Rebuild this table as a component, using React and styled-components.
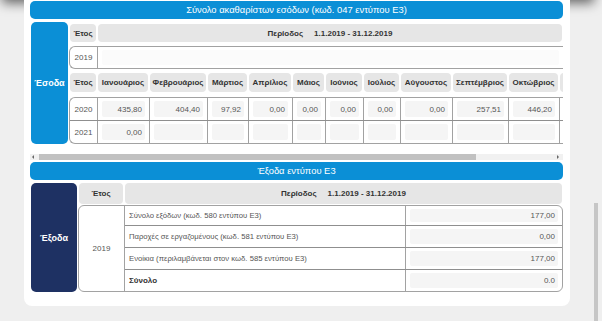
import React from 'react'
import styled, { createGlobalStyle } from 'styled-components'

const GlobalStyle = createGlobalStyle`
  html, body {
    margin: 0;
    padding: 0;
    background: #efefef;
  }
  body {
    font-family: "Liberation Sans", Arial, sans-serif;
  }
`

const Page = styled.div`
  position: relative;
  width: 602px;
  height: 321px;
  overflow: hidden;
  display: flex;
  align-items: flex-start;
  background: #efefef;
`

const TopShade = styled.div`
  position: absolute;
  top: -16px;
  left: 2px;
  right: 8px;
  height: 16px;
  box-shadow: 0 3px 12px rgba(0, 0, 0, 0.6);
`

const Card = styled.div`
  position: relative;
  z-index: 1;
  margin-left: 24px;
  width: 546px;
  box-sizing: border-box;
  background: #fff;
  border-radius: 0 0 8px 8px;
  padding: 1px 7px 14px 6px;
`

const RightRail = styled.div`
  margin-left: 24px;
  margin-top: 203px;
  width: 4px;
  height: 118px;
  background: #c6c6c6;
`

const Banner = styled.div`
  height: 18px;
  line-height: 18px;
  margin-top: ${p => p.$top || 0}px;
  background: #0b8fd6;
  color: #fff;
  text-align: center;
  font-size: 9.4px;
  border-radius: 5px;
`

const Section = styled.div`
  display: flex;
  margin-top: 3px;
  overflow: hidden;
`

const SidePanel = styled.div`
  flex: 0 0 ${p => p.$w}px;
  margin-left: 1px;
  background: ${p => p.$bg};
  border-radius: 5px;
  color: #fff;
  font-size: 9px;
  font-weight: bold;
  display: flex;
  align-items: center;
  justify-content: center;
`

const Grid = styled.div`
  flex: 0 0 ${p => p.$w}px;
  min-width: 0;
  margin-left: 1px;
  padding-top: ${p => p.$pt || 0}px;
  display: flex;
  flex-direction: column;
`

const HeadRow = styled.div`
  display: flex;
  height: ${p => p.$h}px;
  margin-top: ${p => p.$top || 0}px;
`

const HeadCell = styled.div`
  flex: ${p => (p.$w ? `0 0 ${p.$w}px` : '1 1 auto')};
  box-sizing: border-box;
  padding: 0 1px;
`

const Pill = styled.div`
  height: 100%;
  background: #e6e6e6;
  border-radius: 4px;
  color: #333;
  font-size: 8px;
  font-weight: bold;
  display: flex;
  align-items: center;
  justify-content: center;
  white-space: nowrap;
  gap: 11px;
`

const Group = styled.div`
  display: flex;
  flex-direction: ${p => (p.$col ? 'column' : 'row')};
  margin-top: ${p => p.$top || 0}px;
  border: 1px solid #a2a2a2;
  border-right: ${p => (p.$closed ? '1px solid #a2a2a2' : 'none')};
  border-radius: ${p => (p.$closed ? '6px' : '6px 0 0 6px')};
  background: #fff;
`

const Row = styled.div`
  display: flex;
  height: ${p => p.$h}px;
  & + & {
    border-top: 1px solid #8f8f8f;
  }
`

const Cell = styled.div`
  flex: ${p => (p.$w ? `0 0 ${p.$w}px` : '1 1 auto')};
  box-sizing: border-box;
  display: flex;
  align-items: stretch;
  & + & {
    border-left: 1px solid #a2a2a2;
  }
`

const YearText = styled.div`
  flex: 1;
  display: flex;
  align-items: center;
  justify-content: center;
  font-size: 8px;
  color: #555;
`

const Field = styled.div`
  flex: 1;
  margin: 3px 4px;
  background: ${p => (p.$pale ? '#fbfbfb' : '#f5f5f5')};
  border-radius: 2px;
  display: flex;
  align-items: center;
  justify-content: flex-end;
  padding-right: 3px;
  font-size: 8px;
  color: #555;
`

const Label = styled.div`
  flex: 1;
  display: flex;
  align-items: center;
  padding-left: 4px;
  font-size: 7.7px;
  color: #555;
  font-weight: ${p => (p.$bold ? 'bold' : 'normal')};
  ${p => p.$bold && 'color: #333; font-size: 8px;'}
`

const Lines = styled.div`
  flex: 1;
  display: flex;
  flex-direction: column;
  border-left: 1px solid #a2a2a2;
`

const ScrollTrack = styled.div`
  margin-top: 10px;
  height: 6px;
  background: #f1f1f1;
  display: flex;
  align-items: center;
`

const Arrow = styled.span`
  width: 0;
  height: 0;
  margin: 0 2px;
  border-top: 2px solid transparent;
  border-bottom: 2px solid transparent;
  ${p => (p.$dir === 'left'
    ? 'border-right: 2px solid #666;'
    : 'border-left: 2px solid #666; margin-left: auto; margin-right: 4px;')}
`

const Thumb = styled.div`
  margin-left: 3px;
  width: 437px;
  height: 100%;
  background: #c1c1c1;
`

const months = [
  { label: 'Ιανουάριος', w: 52 },
  { label: 'Φεβρουάριος', w: 58 },
  { label: 'Μάρτιος', w: 41 },
  { label: 'Απρίλιος', w: 44 },
  { label: 'Μάιος', w: 33 },
  { label: 'Ιούνιος', w: 38 },
  { label: 'Ιούλιος', w: 37 },
  { label: 'Αύγουστος', w: 52 },
  { label: 'Σεπτέμβριος', w: 56 },
  { label: 'Οκτώβριος', w: 51 },
  { label: '', w: 54 },
]

const incomeRows = [
  { year: '2020', values: ['435,80', '404,40', '97,92', '0,00', '0,00', '0,00', '0,00', '0,00', '257,51', '446,20', ''] },
  { year: '2021', values: ['0,00', '', '', '', '', '', '', '', '', '', ''] },
]

const expenseRows = [
  { label: 'Σύνολο εξόδων (κωδ. 580 εντύπου Ε3)', value: '177,00', h: 19 },
  { label: 'Παροχές σε εργαζομένους (κωδ. 581 εντύπου Ε3)', value: '0,00', h: 21 },
  { label: 'Ενοίκια (περιλαμβάνεται στον κωδ. 585 εντύπου Ε3)', value: '177,00', h: 21 },
  { label: 'Σύνολο', value: '0.0', h: 21, bold: true },
]

const Period = () => (
  <>
    <span>Περίοδος</span>
    <span>1.1.2019 - 31.12.2019</span>
  </>
)

export default function App() {
  return (
    <>
      <GlobalStyle />
      <Page>
        <TopShade />
        <Card>
          <Banner>Σύνολο ακαθαρίστων εσόδων (κωδ. 047 εντύπου Ε3)</Banner>
          <Section>
            <SidePanel $w={37} $bg="#0b8fd6">Έσοδα</SidePanel>
            <Grid $w={494} $pt={2}>
              <HeadRow $h={18}>
                <HeadCell $w={28}><Pill>Έτος</Pill></HeadCell>
                <HeadCell><Pill><Period /></Pill></HeadCell>
              </HeadRow>
              <Group $top={4}>
                <Row $h={21} style={{ flex: 1 }}>
                  <Cell $w={27}><YearText>2019</YearText></Cell>
                  <Cell><Field $pale /></Cell>
                </Row>
              </Group>
              <HeadRow $h={19} $top={4}>
                <HeadCell $w={28}><Pill>Έτος</Pill></HeadCell>
                {months.map((m, i) => (
                  <HeadCell key={i} $w={m.w}><Pill>{m.label}</Pill></HeadCell>
                ))}
              </HeadRow>
              <Group $col $top={5}>
                {incomeRows.map(r => (
                  <Row key={r.year} $h={22}>
                    <Cell $w={27}><YearText>{r.year}</YearText></Cell>
                    {months.map((m, i) => (
                      <Cell key={i} $w={m.w}><Field>{r.values[i]}</Field></Cell>
                    ))}
                  </Row>
                ))}
              </Group>
            </Grid>
          </Section>
          <ScrollTrack>
            <Arrow $dir="left" />
            <Thumb />
            <Arrow $dir="right" />
          </ScrollTrack>
          <Banner $top={2}>Έξοδα εντύπου Ε3</Banner>
          <Section>
            <SidePanel $w={46} $bg="#1e3163">Έξοδα</SidePanel>
            <Grid $w={485}>
              <HeadRow $h={21}>
                <HeadCell $w={46}><Pill>Έτος</Pill></HeadCell>
                <HeadCell><Pill><Period /></Pill></HeadCell>
              </HeadRow>
              <Group $top={1} $closed>
                <Cell $w={45}><YearText>2019</YearText></Cell>
                <Lines>
                  {expenseRows.map(r => (
                    <Row key={r.label} $h={r.h}>
                      <Label $bold={r.bold}>{r.label}</Label>
                      <Cell $w={157} style={{ borderLeft: '1px solid #a2a2a2' }}>
                        <Field>{r.value}</Field>
                      </Cell>
                    </Row>
                  ))}
                </Lines>
              </Group>
            </Grid>
          </Section>
        </Card>
        <RightRail />
      </Page>
    </>
  )
}
